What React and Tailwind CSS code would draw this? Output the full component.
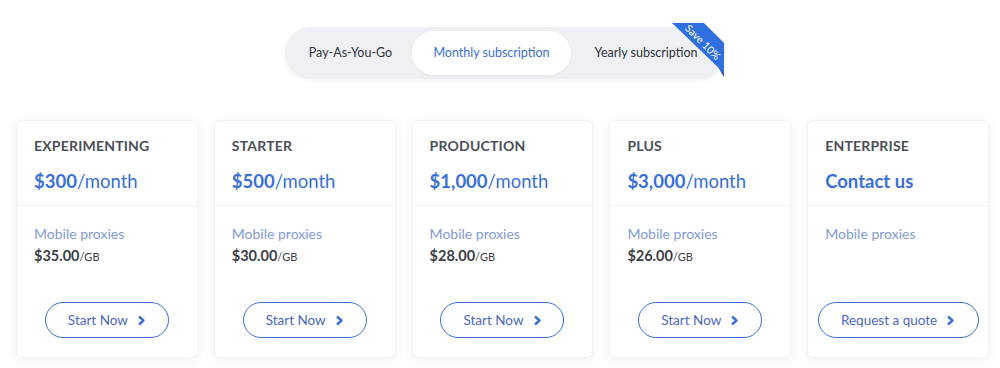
import React from 'react';

const plans = [
  { name: 'EXPERIMENTING', price: '$300', per: '/month', rate: '$35.00', cta: 'Start Now' },
  { name: 'STARTER', price: '$500', per: '/month', rate: '$30.00', cta: 'Start Now' },
  { name: 'PRODUCTION', price: '$1,000', per: '/month', rate: '$28.00', cta: 'Start Now' },
  { name: 'PLUS', price: '$3,000', per: '/month', rate: '$26.00', cta: 'Start Now' },
  { name: 'ENTERPRISE', price: 'Contact us', per: '', rate: null, cta: 'Request a quote' },
];

function Chevron() {
  return (
    <svg width="9" height="11" viewBox="0 0 9 11" className="ml-[9px]">
      <path d="M2 1.5 L6.5 5.5 L2 9.5" fill="none" stroke="#3a6fd8" strokeWidth="2.4" strokeLinejoin="round" />
    </svg>
  );
}

function Toggle() {
  return (
    <div className="relative flex items-center h-[52px] rounded-full bg-[#eef0f4] p-[4px] shadow-[0_1px_4px_rgba(40,60,100,0.08)] text-[12.5px]">
      <div className="w-[123px] h-full flex items-center justify-center text-[#2f333a]">Pay-As-You-Go</div>
      <div className="w-[159px] h-full flex items-center justify-center rounded-full bg-white text-[#3a6fd8] shadow-[0_1px_3px_rgba(40,60,100,0.06)]">
        Monthly subscription
      </div>
      <div className="w-[150px] h-full flex items-center justify-center text-[#2f333a]">Yearly subscription</div>
      <svg width="56" height="54" viewBox="0 0 56 54" className="absolute -top-[4px] -right-[1px]">
        <polygon points="2,0 34,0 54,20 54,50" fill="#2f6fe0" />
        <polygon points="48,44 54,50 54,54" fill="#1c4aa8" />
        <text
          x="0"
          y="0"
          fill="#ffffff"
          fontSize="10.5"
          fontFamily="Lato, sans-serif"
          textAnchor="middle"
          dominantBaseline="central"
          transform="translate(33 19) rotate(45)"
        >
          Save 10%
        </text>
      </svg>
    </div>
  );
}

function Card({ plan }) {
  return (
    <div className="h-[238px] flex flex-col rounded-[6px] bg-white border border-[#f0f2f6] shadow-[0_2px_10px_rgba(40,60,110,0.08)]">
      <div className="px-[17px] pt-[15px] pb-[12px] border-b border-[#f1f3f6]">
        <div className="text-[14px] leading-[20px] font-bold tracking-[0.2px] text-[#4b4f57]">{plan.name}</div>
        <div className="mt-[13px] text-[18.5px] leading-[24px] text-[#3a6fd8]">
          <span className="font-bold">{plan.price}</span>
          <span>{plan.per}</span>
        </div>
      </div>
      <div className="px-[17px] pt-[18px]">
        <div className="text-[14px] leading-[20px] text-[#7f9bd9]">Mobile proxies</div>
        {plan.rate && (
          <div className="leading-[21px] text-[#3b3e45]">
            <span className="text-[14.5px] font-bold">{plan.rate}</span>
            <span className="text-[11px]">/GB</span>
          </div>
        )}
      </div>
      <div className="mt-auto pb-[19px] flex justify-center">
        <button
          className={`h-[36px] rounded-full border-[1.5px] border-[#3a6fd8] flex items-center justify-center text-[13.5px] text-[#4b67c0] ${
            plan.rate ? 'w-[124px]' : 'w-[161px]'
          }`}
        >
          {plan.cta}
          <Chevron />
        </button>
      </div>
    </div>
  );
}

export default function App() {
  return (
    <div className="w-[1000px] h-[368px] bg-white overflow-hidden font-['Lato',sans-serif]">
      <div className="pt-[27px] flex justify-center pl-[10px]">
        <Toggle />
      </div>
      <div className="mt-[41px] pl-[16px] pr-[11px] grid grid-cols-5 gap-[16px]">
        {plans.map((p) => (
          <Card key={p.name} plan={p} />
        ))}
      </div>
    </div>
  );
}
